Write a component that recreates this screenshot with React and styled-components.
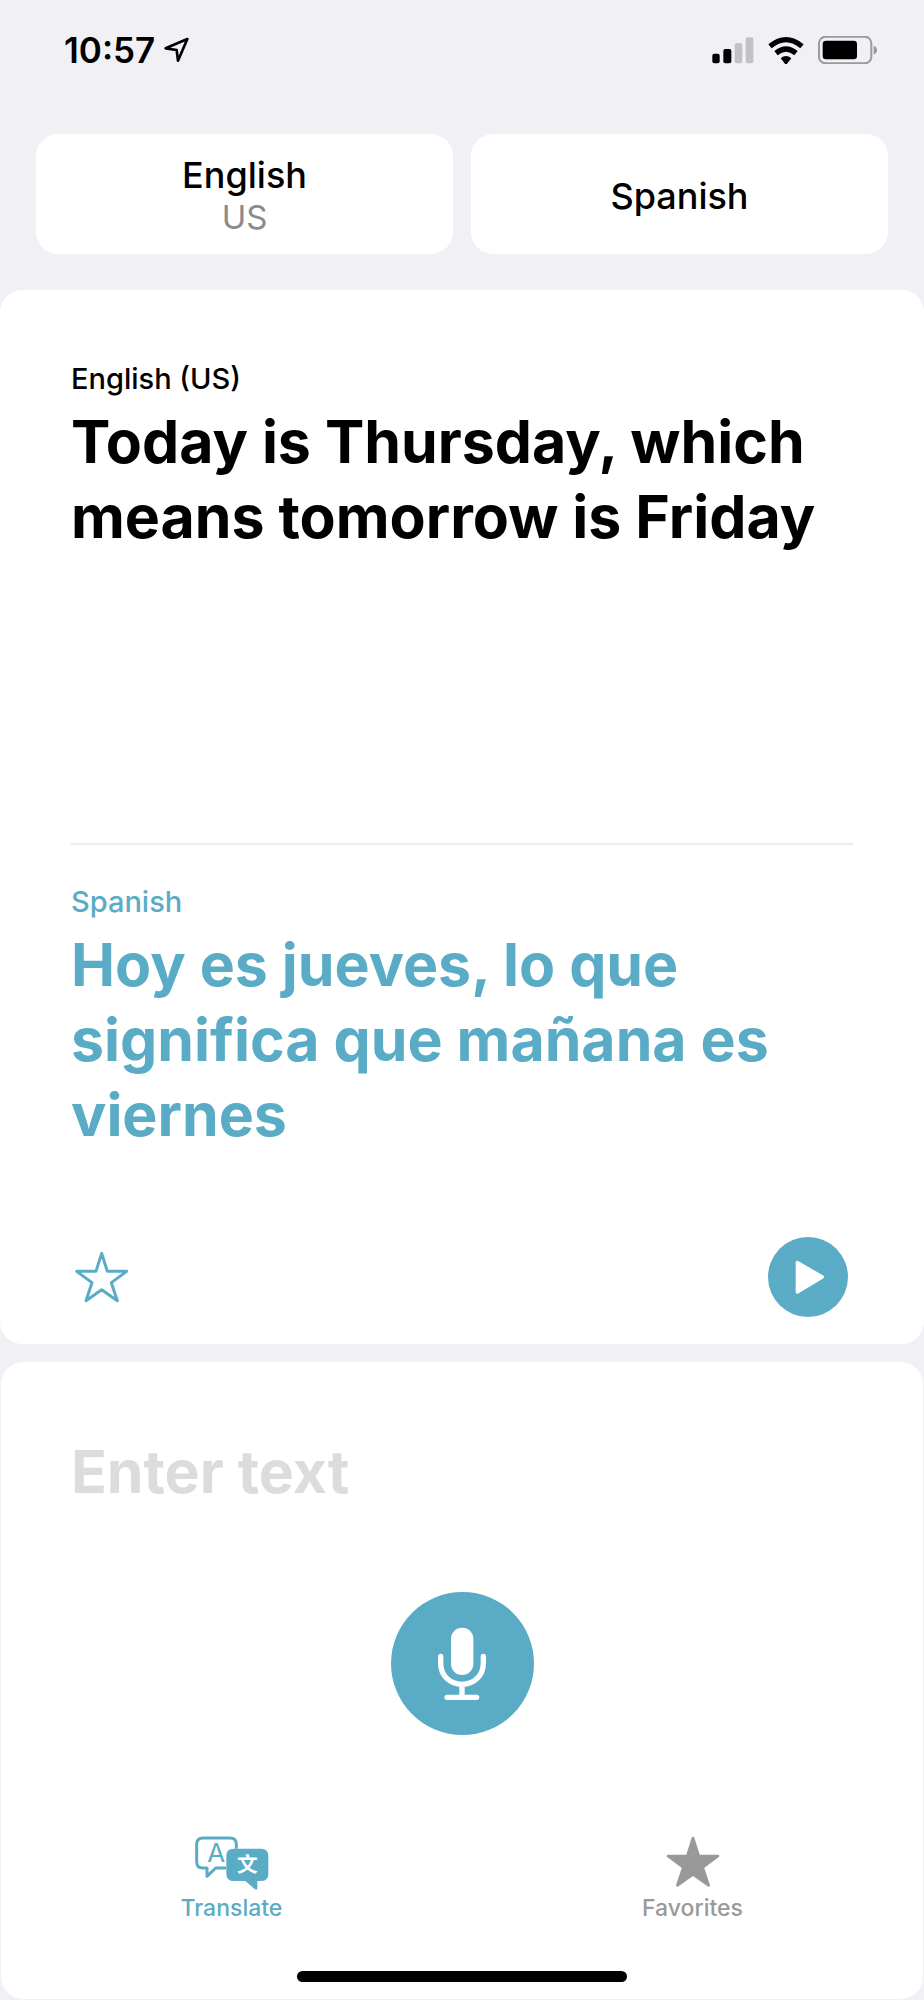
import React, {useState} from 'react';
import styled, {createGlobalStyle} from 'styled-components';

const GlobalStyle = createGlobalStyle`
	:root {
		--accent: #5aacc6;
		--bg: #f0f0f5;
		--muted: #8a8a8e;
		--tab-off: #999999;
	}

	* {
		box-sizing: border-box;
	}

	body {
		margin: 0;
		background-color: var(--bg);
		color: black;
		font-family: Inter, "Liberation Sans", sans-serif;
	}

	button, input {
		font-family: inherit;
		color: inherit;
		border: none;
		padding: 0;
		margin: 0;
		background: none;
	}

	button {
		cursor: pointer;
	}

	svg {
		display: block;
	}
`;

const Screen = styled.div`
	display: flex;
	flex-direction: column;
	min-height: 100vh;
	padding-bottom: 1px;
`;

const StatusBar = styled.header`
	display: flex;
	justify-content: space-between;
	align-items: center;
	height: 100px;
	padding: 0 46px 0 64px;
`;

const StatusGroup = styled.div`
	display: flex;
	align-items: center;
	gap: ${props => props.$gap};
`;

const Clock = styled.time`
	font-size: 35px;
	line-height: 40px;
	font-weight: 600;
`;

const Languages = styled.div`
	display: grid;
	grid-template-columns: 1fr 1fr;
	gap: 18px;
	padding: 34px 36px 36px;
`;

const LanguageButton = styled.button`
	display: flex;
	flex-direction: column;
	align-items: center;
	justify-content: center;
	height: 120px;
	padding-top: 3px;
	border-radius: 22px;
	background-color: white;
	font-size: 36px;
	line-height: 42px;
	font-weight: 500;
`;

const Region = styled.span`
	color: var(--muted);
	font-size: 33px;
	font-weight: 400;
`;

const Card = styled.main`
	display: flex;
	flex-direction: column;
	padding: 72px 71px 27px;
	border-radius: 22px;
	background-color: white;
`;

const Phrase = styled.section`
	min-height: ${props => props.$minHeight};
	color: ${props => props.$color};
`;

const PhraseLabel = styled.h2`
	margin: 0 0 8px;
	font-size: 29px;
	line-height: 34px;
	font-weight: 500;
`;

const PhraseText = styled.p`
	margin: 0;
	font-size: 59px;
	line-height: 75px;
	font-weight: 700;
`;

const Divider = styled.hr`
	width: 100%;
	height: 2px;
	margin: 0 0 40px;
	border: none;
	background-color: #ececee;
`;

const Actions = styled.div`
	display: flex;
	justify-content: space-between;
	align-items: center;
	padding: 0 5px 0 4px;
`;

const StarButton = styled.button`
	color: var(--accent);
`;

const RoundButton = styled.button`
	display: flex;
	justify-content: center;
	align-items: center;
	width: ${props => props.$size};
	height: ${props => props.$size};
	border-radius: 50%;
	background-color: var(--accent);
	color: white;
`;

const Composer = styled.section`
	display: flex;
	flex-direction: column;
	align-items: center;
	flex: 1;
	margin: 18px 1px 0;
	padding-top: 72px;
	border-radius: 22px;
	background-color: white;
`;

const EntryRow = styled.div`
	align-self: stretch;
	padding: 0 70px;
	margin-bottom: 83px;
`;

const TextEntry = styled.input`
	display: block;
	width: 100%;
	height: 75px;
	font-size: 59px;
	line-height: 75px;
	font-weight: 700;
	outline: none;

	&::placeholder{
		color: #dcdcdc;
		opacity: 1;
	}
`;

const TabBar = styled.nav`
	display: grid;
	grid-template-columns: 1fr 1fr;
	align-self: stretch;
	margin-top: 101px;
`;

const Tab = styled.a`
	display: flex;
	flex-direction: column;
	align-items: center;
	gap: 4px;
	color: ${props => props.$active ? 'var(--accent)' : 'var(--tab-off)'};
	font-size: 23px;
	line-height: 28px;
	font-weight: 500;
	text-decoration: none;
`;

const HomeIndicator = styled.div`
	width: 330px;
	height: 11px;
	margin-top: auto;
	margin-bottom: 17px;
	border-radius: 6px;
	background-color: black;
`;

const STAR = 'M155 99 L172 153 L230 153 L184 187 L202 241 L155 208 L108 241 L126 187 L80 153 L138 153 Z';

function LocationIcon(){
	return(
		<svg width="25" height="26" viewBox="378 51 75 78" fill="none" stroke="black" strokeWidth="8" strokeLinejoin="round">
			<path d="M448 57 L383 85 L416 90 L420 122 Z" />
		</svg>
	)
}

function SignalIcon(){
	return(
		<svg width="42" height="27" viewBox="65 50 126 81">
			<rect x="66" y="100" width="22" height="29" rx="6" />
			<rect x="99" y="86" width="24" height="43" rx="6" />
			<rect x="133" y="68" width="23" height="61" rx="6" fill="#c2c2c6" />
			<rect x="166" y="51" width="23" height="78" rx="6" fill="#c2c2c6" />
		</svg>
	)
}

function WifiIcon(){
	return(
		<svg width="36" height="27" viewBox="232 49 108 81">
			<path d="M233 71 Q286 27 339 71 L329 83 Q286 47 243 83 Z" />
			<path d="M251 91 Q286 62 321 91 L311 104 Q286 83 261 104 Z" />
			<path d="M270 113 Q286 99 302 113 L289 129 Q286 132 283 129 Z" />
		</svg>
	)
}

function BatteryIcon(){
	return(
		<svg width="60" height="28" viewBox="382 48 180 84">
			<rect x="385" y="50" width="157" height="80" rx="20" fill="none" stroke="#9a9a9e" strokeWidth="6" />
			<rect x="396" y="62" width="103" height="56" rx="10" />
			<path d="M549 77 Q559 81 559 90 Q559 100 549 104 Z" fill="#9a9a9e" />
		</svg>
	)
}

function OutlineStar(){
	return(
		<svg width="53" height="52" viewBox="75 92 159 156" fill="none" stroke="currentColor" strokeWidth="9" strokeLinejoin="round">
			<path d={STAR} />
		</svg>
	)
}

function SolidStar(){
	return(
		<svg width="54" height="54" viewBox="74 93 162 162" fill="currentColor" stroke="currentColor" strokeWidth="8" strokeLinejoin="round">
			<path d={STAR} />
		</svg>
	)
}

function PlayIcon(){
	return(
		<svg width="34" height="36" viewBox="154 147 102 108" fill="white" stroke="white" strokeWidth="10" strokeLinejoin="round">
			<path d="M173 157 L248 201 L173 246 Z" />
		</svg>
	)
}

function MicIcon(){
	return(
		<svg width="50" height="74" viewBox="201 168 150 222" fill="none" stroke="white" strokeWidth="16" strokeLinecap="round">
			<rect x="243" y="170" width="67" height="142" rx="33" fill="white" stroke="none" />
			<path d="M212 256 V276 C212 314 240 340 276 340 C312 340 340 314 340 276 V256" />
			<path d="M276 342 V376 M231 379 H320" />
		</svg>
	)
}

function TranslateIcon(){
	return(
		<svg width="74" height="54" viewBox="101 78 222 162" fill="none" stroke="currentColor" strokeLinejoin="round">
			<path d="M225 116 V103 Q225 84 206 84 H125 Q106 84 106 103 V155 Q106 174 125 174 H137 V199 L163 174 H194" strokeWidth="9" />
			<text x="165" y="157" fontFamily="Inter, sans-serif" fontSize="78" fontWeight="400" textAnchor="middle" fill="currentColor" stroke="none">A</text>
			<path d="M217 116 H299 Q321 116 321 138 V191 Q321 213 299 213 H288 V234 Q288 243 280 237 L252 213 H217 Q195 213 195 191 V138 Q195 116 217 116 Z" fill="currentColor" stroke="none" />
			<text x="258" y="187" fontFamily='"Noto Sans CJK SC", sans-serif' fontSize="62" fontWeight="700" textAnchor="middle" fill="white" stroke="none">文</text>
		</svg>
	)
}

function App(){
	const [text, setText] = useState('');

	return(
		<Screen>
			<GlobalStyle />

			<StatusBar>
				<StatusGroup $gap="9px">
					<Clock>10:57</Clock>
					<LocationIcon />
				</StatusGroup>
				<StatusGroup $gap="14px">
					<SignalIcon />
					<WifiIcon />
					<BatteryIcon />
				</StatusGroup>
			</StatusBar>

			<Languages>
				<LanguageButton type="button">
					English
					<Region>US</Region>
				</LanguageButton>
				<LanguageButton type="button">Spanish</LanguageButton>
			</Languages>

			{/* translation */}
			<Card>
				<Phrase lang="en" $color="black" $minHeight="481px">
					<PhraseLabel>English (US)</PhraseLabel>
					<PhraseText>Today is Thursday, which means tomorrow is Friday</PhraseText>
				</Phrase>
				<Divider />
				<Phrase lang="es" $color="var(--accent)" $minHeight="352px">
					<PhraseLabel>Spanish</PhraseLabel>
					<PhraseText>Hoy es jueves, lo que significa que mañana es viernes</PhraseText>
				</Phrase>
				<Actions>
					<StarButton type="button" aria-label="Add to favorites">
						<OutlineStar />
					</StarButton>
					<RoundButton type="button" aria-label="Play translation" $size="80px">
						<PlayIcon />
					</RoundButton>
				</Actions>
			</Card>

			{/* input and tabs */}
			<Composer>
				<EntryRow>
					<TextEntry
						type="text"
						aria-label="Enter text"
						placeholder="Enter text"
						value={text}
						onChange={e => setText(e.target.value)}
					/>
				</EntryRow>
				<RoundButton type="button" aria-label="Speak" $size="143px">
					<MicIcon />
				</RoundButton>
				<TabBar>
					<Tab href="#translate" $active>
						<TranslateIcon />
						Translate
					</Tab>
					<Tab href="#favorites">
						<SolidStar />
						Favorites
					</Tab>
				</TabBar>
				<HomeIndicator />
			</Composer>
		</Screen>
	)
}

export default App;
